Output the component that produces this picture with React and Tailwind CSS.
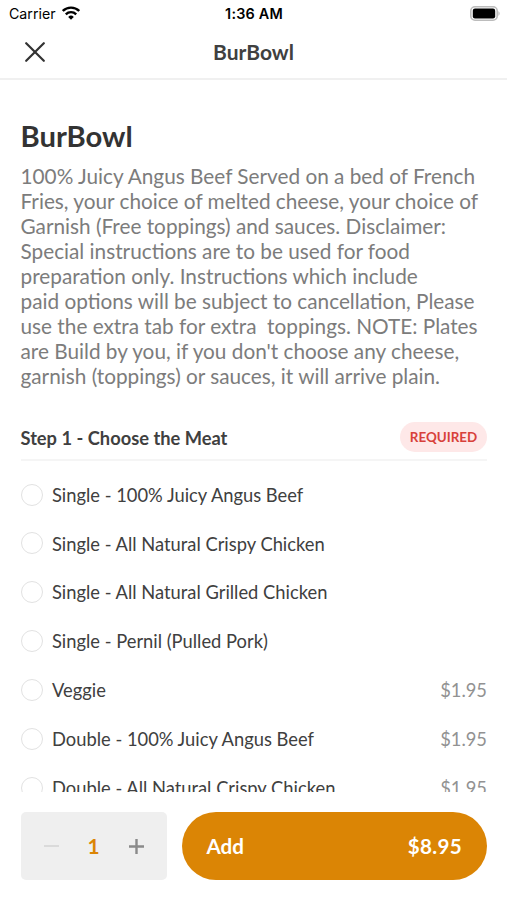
import React from 'react';

const description = [
  '100% Juicy Angus Beef Served on a bed of French',
  'Fries, your choice of melted cheese, your choice of',
  'Garnish (Free toppings) and sauces. Disclaimer:',
  'Special instructions are to be used for food',
  'preparation only. Instructions which include',
  'paid options will be subject to cancellation, Please',
  'use the extra tab for extra  toppings. NOTE: Plates',
  "are Build by you, if you don't choose any cheese,",
  'garnish (toppings) or sauces, it will arrive plain.',
];

const options = [
  { name: 'Single - 100% Juicy Angus Beef' },
  { name: 'Single - All Natural Crispy Chicken' },
  { name: 'Single - All Natural Grilled Chicken' },
  { name: 'Single - Pernil (Pulled Pork)' },
  { name: 'Veggie', price: '$1.95' },
  { name: 'Double - 100% Juicy Angus Beef', price: '$1.95' },
  { name: 'Double - All Natural Crispy Chicken', price: '$1.95' },
];

function StatusBar() {
  return (
    <div className="grid h-[27px] shrink-0 grid-cols-3 items-center pr-[6px] pl-[9px] font-['Inter',sans-serif] text-[14.2px] leading-none text-black">
      <div className="flex items-center gap-[6px]">
        <span className="pt-px">Carrier</span>
        <svg width="18" height="14" viewBox="0 0 18 14" fill="none" stroke="#000" strokeWidth="2.4">
          <path d="M.8 5a11.6 11.6 0 0 1 16.4 0" />
          <path d="M3.8 8.3a7.4 7.4 0 0 1 10.4 0" />
          <path d="M9 13.7 6.2 10.9a4 4 0 0 1 5.6 0z" fill="#000" stroke="none" />
        </svg>
      </div>
      <div className="pt-px pr-[2px] text-center text-[14.4px] font-semibold tracking-[0.2px] whitespace-nowrap">1:36 AM</div>
      <svg className="justify-self-end" width="31" height="15" viewBox="0 0 31 15">
        <rect x=".8" y=".8" width="26.4" height="13.4" rx="4.2" fill="#fff" stroke="#bcbcbc" strokeWidth="1.6" />
        <rect x="2.8" y="2.6" width="22.4" height="9.8" rx="2.2" />
        <path d="M28.4 5q2.6 2.5 0 5z" fill="#bcbcbc" />
      </svg>
    </div>
  );
}

export default function App() {
  return (
    <div className="flex h-[900px] w-[507px] flex-col overflow-hidden bg-white font-['Lato',sans-serif] text-[#404040]">
      <StatusBar />
      <header className="grid h-[53px] shrink-0 grid-cols-3 items-center border-b-2 border-[#f0f0f0] px-[25px] pb-px">
        <svg width="20" height="20" viewBox="0 0 20 20" fill="none" stroke="#333" strokeWidth="2.2" strokeLinecap="round">
          <path d="m1.2 1.2 17.6 17.6M18.8 1.2 1.2 18.8" />
        </svg>
        <div className="text-center text-[21px] leading-[30px] font-bold">BurBowl</div>
      </header>
      <main className="min-h-0 flex-1 overflow-hidden pt-[37px] pr-[20px] pl-[20.5px]">
        <h1 className="h-[47.2px] text-[29.2px] leading-[38px] font-bold text-[#333]">BurBowl</h1>
        <div className="text-[20.77px] leading-[24.98px] whitespace-pre text-[#7c7c7c]">
          {description.map((line) => (
            <p key={line}>{line}</p>
          ))}
        </div>
        <div className="mt-[26.2px] flex h-[45.5px] items-center justify-between border-b-2 border-[#f5f5f5]">
          <h2 className="pt-[4px] text-[18.3px] font-bold">Step 1 - Choose the Meat</h2>
          <span className="flex h-[30px] w-[87px] items-center justify-center rounded-full bg-[#fee8e8] text-[13.4px] font-bold text-[#d8413b]">REQUIRED</span>
        </div>
        <ul className="pt-[9.4px]">
          {options.map((option) => (
            <li key={option.name} className="flex h-[48.85px] items-center text-[18.33px]">
              <span className="mr-[9.5px] size-[22px] shrink-0 rounded-full border-[1.5px] border-[#e2e2e2]" />
              <span className="pt-[2px]">{option.name}</span>
              <span className="ml-auto pt-[2px] text-[#929292]">{option.price}</span>
            </li>
          ))}
        </ul>
      </main>
      <footer className="flex h-[108px] shrink-0 gap-[15px] pt-[20px] pl-[20.5px]">
        <div className="flex h-[68px] w-[146px] items-center justify-between rounded-[5px] bg-[#efefef] px-[23px]">
          <span className="h-[2px] w-[15px] bg-[#dadada]" />
          <span className="text-[20.8px] font-bold text-[#db8505]">1</span>
          <svg width="15" height="15" viewBox="0 0 15 15" stroke="#8a8a8a" strokeWidth="2.4">
            <path d="M0 7.5h15M7.5 0v15" />
          </svg>
        </div>
        <button className="flex h-[68px] w-[305.5px] items-center justify-between rounded-full bg-[#db8505] px-[25px] text-[20.6px] font-bold text-white">
          <span>Add</span>
          <span className="tracking-[0.3px]">$8.95</span>
        </button>
      </footer>
    </div>
  );
}
